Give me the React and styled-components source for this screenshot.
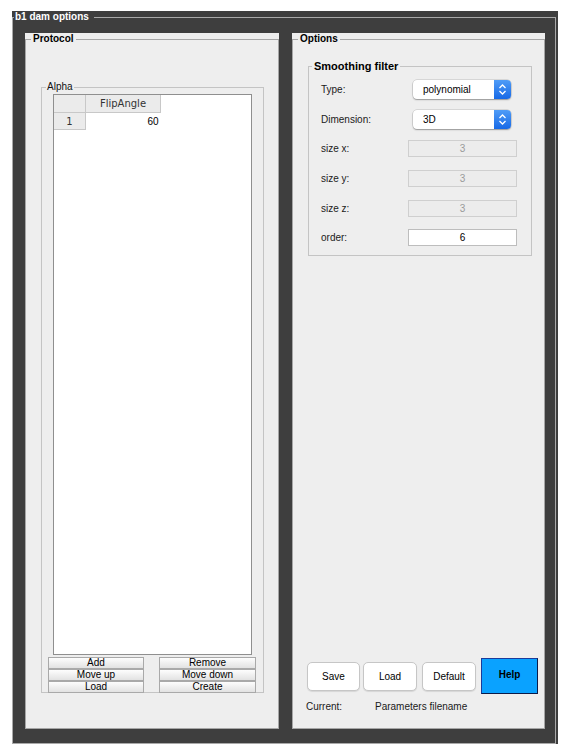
import styled, { createGlobalStyle } from 'styled-components';

const GlobalStyle = createGlobalStyle`
  body {
    margin: 0;
    background: #fff;
    font-family: "Liberation Sans", Arial, sans-serif;
    font-size: 10px;
    color: #111;
  }
`;

export default function App() {
  return (
    <>
      <GlobalStyle />
      <Frame>
        <FrameSet>
          <FrameLegend>b1 dam options</FrameLegend>

          <Panel>
            <ProtocolSet>
              <PanelLegend>Protocol</PanelLegend>
              <AlphaSet>
                <AlphaLegend>Alpha</AlphaLegend>
                <TableBox>
                  <Table>
                    <thead>
                      <tr>
                        <Corner />
                        <HeadCell>FlipAngle</HeadCell>
                      </tr>
                    </thead>
                    <tbody>
                      <tr>
                        <RowHead>1</RowHead>
                        <ValueCell>60</ValueCell>
                      </tr>
                    </tbody>
                  </Table>
                </TableBox>
                <ListButtons>
                  {listButtons.map(label => (
                    <BevelButton key={label}>{label}</BevelButton>
                  ))}
                </ListButtons>
              </AlphaSet>
            </ProtocolSet>
          </Panel>

          <Panel>
            <OptionsSet>
              <PanelLegend>Options</PanelLegend>
              <FilterSet>
                <FilterLegend>Smoothing filter</FilterLegend>
                <FormGrid>
                  {fields.map(f => (
                    <FormRow key={f.label} field={f} />
                  ))}
                </FormGrid>
              </FilterSet>

              <ActionRow>
                <PushButton $w={53} $ml={0}>Save</PushButton>
                <PushButton $w={54} $ml={3}>Load</PushButton>
                <PushButton $w={54} $ml={5}>Default</PushButton>
                <HelpButton>Help</HelpButton>
              </ActionRow>
              <CurrentRow>
                <span>Current:</span>
                <span>Parameters filename</span>
              </CurrentRow>
            </OptionsSet>
          </Panel>
        </FrameSet>
      </Frame>
    </>
  );
}

function FormRow({ field }) {
  let control;
  if (field.kind === 'popup') {
    control = (
      <Popup>
        <PopupText>{field.value}</PopupText>
        <PopupArrows>
          <svg width="17" height="19" viewBox="0 0 17 19">
            <path d="M5.5 8 L8.5 5 L11.5 8" fill="none" stroke="#fff" strokeWidth="1.3" />
            <path d="M5.5 11 L8.5 14 L11.5 11" fill="none" stroke="#fff" strokeWidth="1.3" />
          </svg>
        </PopupArrows>
      </Popup>
    );
  } else {
    control = <Field $disabled={field.disabled}>{field.value}</Field>;
  }
  return (
    <>
      <Label>{field.label}</Label>
      {control}
    </>
  );
}

const listButtons = ['Add', 'Remove', 'Move up', 'Move down', 'Load', 'Create'];

const fields = [
  { label: 'Type:', kind: 'popup', value: 'polynomial' },
  { label: 'Dimension:', kind: 'popup', value: '3D' },
  { label: 'size x:', kind: 'edit', value: '3', disabled: true },
  { label: 'size y:', kind: 'edit', value: '3', disabled: true },
  { label: 'size z:', kind: 'edit', value: '3', disabled: true },
  { label: 'order:', kind: 'edit', value: '6' },
];

const Frame = styled.div`
  margin: 11px 0 0 12px;
  width: 546px;
  background: #3e3e3e;
`;

const FrameSet = styled.fieldset`
  margin: 0 2px 0 0;
  min-width: 0;
  border: 1px solid #a9a9a9;
  padding: 10px 10px 14px 12px;
  display: grid;
  grid-template-columns: 254px 253px;
  grid-template-rows: 696px;
  column-gap: 13px;
`;

const FrameLegend = styled.legend`
  margin-left: -11px;
  padding: 0 5px 0 1px;
  color: #fff;
  font-weight: bold;
  font-size: 10px;
  line-height: 12px;
`;

const Panel = styled.div`
  display: flex;
  background: #eeeeee;
`;

const ProtocolSet = styled.fieldset`
  flex: 1;
  margin: 0;
  min-width: 0;
  border: 1px solid #a6a6a6;
  padding: 36px 14px 35px 15px;
  display: flex;
  flex-direction: column;
`;

const PanelLegend = styled.legend`
  margin-left: -10px;
  padding: 0 2px;
  font-weight: bold;
  font-size: 10px;
  line-height: 12px;
  color: #000;
`;

const AlphaSet = styled.fieldset`
  flex: 1;
  margin: 0;
  min-width: 0;
  border: 1px solid #c4c4c4;
  padding: 1px 6px 0 6px;
  display: flex;
  flex-direction: column;
`;

const AlphaLegend = styled.legend`
  margin-left: -2px;
  padding: 0 1px;
  font-size: 10px;
  line-height: 12px;
  color: #111;
`;

const TableBox = styled.div`
  flex: 1;
  margin: 0 5px 2px;
  background: #fff;
  border: 1px solid #8f8f8f;
  overflow: hidden;
`;

const Table = styled.table`
  border-collapse: collapse;
  table-layout: fixed;
`;

const Corner = styled.th`
  width: 31px;
  height: 17px;
  padding: 0;
  background: #ebebeb;
  border-right: 1px solid #c8c8c8;
  border-bottom: 1px solid #c8c8c8;
`;

const HeadCell = styled.th`
  width: 74px;
  height: 17px;
  padding: 0;
  background: #ebebeb;
  border-right: 1px solid #c8c8c8;
  border-bottom: 1px solid #c8c8c8;
  font-family: "DejaVu Sans", sans-serif;
  font-weight: normal;
  font-size: 10px;
  color: #333;
`;

const RowHead = styled.td`
  height: 16px;
  padding: 0;
  background: #ebebeb;
  border-right: 1px solid #c8c8c8;
  border-bottom: 1px solid #c8c8c8;
  text-align: center;
  font-family: "DejaVu Sans", sans-serif;
  font-size: 10px;
  color: #333;
`;

const ValueCell = styled.td`
  height: 16px;
  padding: 0 2px 0 0;
  text-align: right;
  font-size: 10px;
  color: #000;
`;

const ListButtons = styled.div`
  display: grid;
  grid-template-columns: 96px 97px;
  grid-auto-rows: 12px;
  column-gap: 15px;
  margin-bottom: -1px;
`;

const BevelButton = styled.button`
  height: 12px;
  padding: 0;
  border: 1px solid #a9a9a9;
  background: linear-gradient(#fdfdfd, #e2e2e2);
  font-family: "Liberation Sans", Arial, sans-serif;
  font-size: 10px;
  line-height: 10px;
  color: #000;
`;

const OptionsSet = styled.fieldset`
  flex: 1;
  margin: 0;
  min-width: 0;
  border: 1px solid #a6a6a6;
  padding: 14px 12px 16px 15px;
  display: flex;
  flex-direction: column;
`;

const FilterSet = styled.fieldset`
  margin: 0;
  min-width: 0;
  border: 1px solid #c4c4c4;
  padding: 2px 14px 2px 12px;
`;

const FilterLegend = styled.legend`
  margin-left: -9px;
  padding: 0 2px;
  font-weight: bold;
  font-size: 11px;
  line-height: 14px;
  color: #000;
`;

const FormGrid = styled.div`
  display: grid;
  grid-template-columns: 87px 109px;
  grid-auto-rows: 29.6px;
  align-items: center;
`;

const Label = styled.span`
  font-size: 10px;
  color: #1a1a1a;
`;

const Popup = styled.div`
  display: flex;
  width: 98px;
  height: 19px;
  margin-left: 5px;
  background: #fff;
  border-radius: 4px;
  box-shadow: 0 0 0 0.5px rgba(0, 0, 0, 0.18), 0 1px 1.5px rgba(0, 0, 0, 0.3);
  overflow: hidden;
`;

const PopupText = styled.span`
  flex: 1;
  padding-left: 10px;
  line-height: 19px;
  font-size: 10px;
  color: #000;
`;

const PopupArrows = styled.span`
  width: 17px;
  display: flex;
  background: linear-gradient(#4f9cf7, #1769e6);
`;

const Field = styled.div`
  box-sizing: border-box;
  width: 109px;
  height: 17px;
  border: 1px solid ${p => (p.$disabled ? '#cfcfcf' : '#bdbdbd')};
  background: ${p => (p.$disabled ? '#ececec' : '#fff')};
  color: ${p => (p.$disabled ? '#9a9a9a' : '#000')};
  font-size: 10px;
  line-height: 15px;
  text-align: center;
`;

const ActionRow = styled.div`
  margin-top: auto;
  margin-left: -1px;
  display: flex;
  align-items: center;
  height: 36px;
`;

const PushButton = styled.button`
  flex: none;
  box-sizing: border-box;
  width: ${p => p.$w}px;
  height: 29px;
  margin-left: ${p => p.$ml}px;
  padding: 0;
  background: #fff;
  border: 1px solid #c6c6c6;
  border-radius: 5px;
  box-shadow: 0 1px 1px rgba(0, 0, 0, 0.1);
  font-family: "Liberation Sans", Arial, sans-serif;
  font-size: 10px;
  color: #000;
`;

const HelpButton = styled.button`
  flex: none;
  box-sizing: border-box;
  width: 57px;
  height: 36px;
  margin-left: 5px;
  padding: 0 0 4px;
  background: #0aa2ff;
  border: 1px solid #1c3a9a;
  border-right-color: #0b1a48;
  border-bottom-color: #0b1a48;
  font-family: "Liberation Sans", Arial, sans-serif;
  font-weight: bold;
  font-size: 10px;
  color: #000;
`;

const CurrentRow = styled.div`
  margin: 7px 0 0 -2px;
  display: grid;
  grid-template-columns: 69px auto;
  font-size: 10px;
  line-height: 11px;
  color: #1a1a1a;
`;
